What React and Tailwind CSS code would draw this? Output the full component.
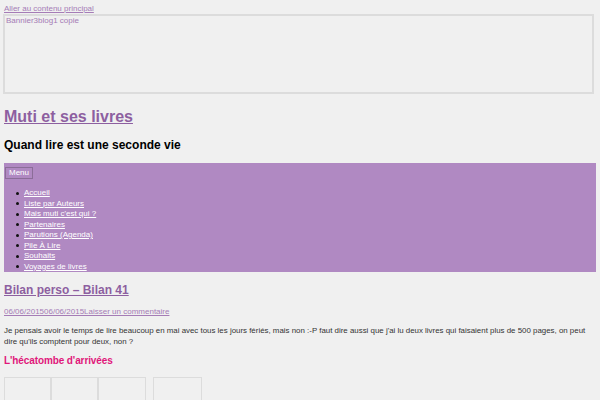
const menuItems = [
  'Accueil',
  'Liste par Auteurs',
  "Mais muti c'est qui ?",
  'Partenaires',
  'Parutions (Agenda)',
  'Pile À Lire',
  'Souhaits',
  'Voyages de livres',
];

export default function App() {
  return (
    <div className="h-[400px] w-[600px] overflow-hidden bg-[#f0f0f0] px-[4px] text-[#333] [font-family:'Liberation_Sans',Arial,sans-serif]">
      {/* Skip link */}
      <a href="#main" className="block pt-[4px] text-[8px] leading-[10px] text-[#a57cb6] underline">
        Aller au contenu principal
      </a>

      {/* Banner (broken image) */}
      <div className="ml-[-1px] h-[80px] w-[591px] border-2 border-[#dcdcdc]">
        <span className="block pl-[1px] text-[8px] leading-[9px] text-[#a57cb6]">Bannier3blog1 copie</span>
      </div>

      {/* Site title */}
      <h1 className="mt-[13px] text-[16px] leading-[20px] font-bold text-[#8d5fa0] underline">Muti et ses livres</h1>
      <p className="mt-[10px] text-[12px] leading-[16px] font-bold text-black">Quand lire est une seconde vie</p>

      {/* Navigation */}
      <nav className="mt-[10px] h-[109px] w-[592px] bg-[#b089c2] pt-[4px] pl-[1px]">
        <button className="block h-[12px] border border-[#8b6d98] bg-[#b089c2] px-[3px] text-[8px] leading-[10px] text-white">
          Menu
        </button>
        <ul className="mt-[9px] text-[8px] leading-[10.5px]">
          {menuItems.map(item => (
            <li key={item} className="flex items-center">
              <span className="ml-[11px] mr-[5px] h-[3px] w-[3px] rounded-full bg-[#111]"></span>
              <a href="#" className="text-white underline">{item}</a>
            </li>
          ))}
        </ul>
      </nav>

      {/* Post */}
      <main id="main">
        <h2 className="mt-[10px] text-[12px] leading-[16px] font-bold text-[#8d5fa0] underline">Bilan perso – Bilan 41</h2>
        <p className="mt-[9px] text-[8px] leading-[10px] text-[#a57cb6] underline">
          06/06/201506/06/2015Laisser un commentaire
        </p>
        <p className="mt-[8px] text-[7.9px] leading-[11px] text-[#333]">
          Je pensais avoir le temps de lire beaucoup en mai avec tous les jours fériés, mais non :-P faut dire aussi que j'ai lu deux livres qui faisaient plus de 500 pages, on peut dire qu'ils comptent pour deux, non ?
        </p>
        <h3 className="mt-[7px] text-[10px] leading-[14px] font-bold tracking-[-0.1px] text-[#e0177a]">L'hécatombe d'arrivées</h3>

        <div className="mt-[9px] flex">
          <div className="h-[40px] w-[47px] border border-[#dcdcdc]"></div>
          <div className="h-[40px] w-[47px] border border-[#dcdcdc]"></div>
          <div className="h-[40px] w-[48px] border border-[#dcdcdc]"></div>
          <div className="ml-[7px] h-[40px] w-[49px] border border-[#dcdcdc]"></div>
        </div>
      </main>
    </div>
  );
}
